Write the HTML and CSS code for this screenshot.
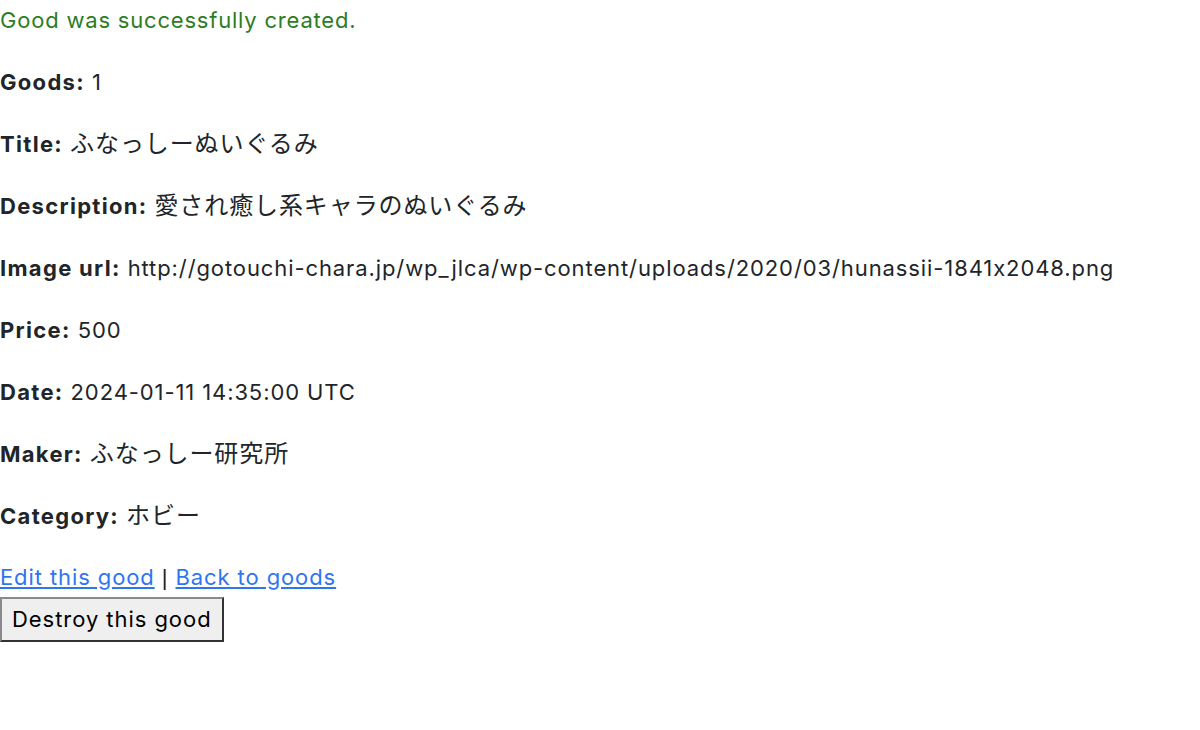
FILE: index.html
```html
<!DOCTYPE html>
<html lang="ja">
<head>
<meta charset="utf-8">
<title>Good</title>
<link rel="stylesheet" href="styles.css">
</head>
<body>
<p class="notice">Good was successfully created.</p>
<div class="good">
  <p><strong>Goods:</strong> 1</p>
  <p><strong>Title:</strong> <span class="ja">ふなっしーぬいぐるみ</span></p>
  <p><strong>Description:</strong> <span class="ja">愛され癒し系キャラのぬいぐるみ</span></p>
  <p><strong>Image url:</strong> http://gotouchi-chara.jp/wp_jlca/wp-content/uploads/2020/03/hunassii-1841x2048.png</p>
  <p><strong>Price:</strong> 500</p>
  <p><strong>Date:</strong> 2024-01-11 14:35:00 UTC</p>
  <p><strong>Maker:</strong> <span class="ja">ふなっしー研究所</span></p>
  <p><strong>Category:</strong> <span class="ja">ホビー</span></p>
</div>
<div class="actions">
  <div class="links"><a href="#">Edit this good</a> <span class="sep">|</span> <a href="#">Back to goods</a></div>
  <form class="button_to"><button type="button" class="destroy">Destroy this good</button></form>
</div>
</body>
</html>
```
FILE: styles.css
```css
html, body {
  margin: 0;
  padding: 0;
  background: #fff;
}
body {
  font-family: Inter, "Noto Sans CJK JP", sans-serif;
  font-size: 22px;
  line-height: 40px;
  letter-spacing: 0.9px;
  font-feature-settings: "calt" 0;
  color: #212529;
}
p {
  margin: 0 0 22px 0;
}
.notice {
  color: #2c7d1f;
  letter-spacing: 0.8px;
}
strong {
  font-weight: bold;
  letter-spacing: 1.3px;
}
.ja {
  font-family: "Noto Sans CJK JP", sans-serif;
  font-size: 24px;
  line-height: 24px;
  letter-spacing: 0.9px;
}
.links {
  line-height: 38px;
}
.links a {
  color: #2f74f0;
  text-decoration: underline;
}
.sep {
  font-family: "Liberation Sans", sans-serif;
}
.button_to {
  margin: 0;
}
.destroy {
  font-family: Inter, sans-serif;
  font-size: 22px;
  line-height: 25px;
  letter-spacing: 0.95px;
  font-feature-settings: "calt" 0;
  color: #000;
  background: #efefef;
  border: 2px solid;
  border-top-color: #8a8a8a;
  border-left-color: #8a8a8a;
  border-right-color: #333;
  border-bottom-color: #333;
  padding: 8px 10px;
  margin: 0;
  border-radius: 0;
}
```
